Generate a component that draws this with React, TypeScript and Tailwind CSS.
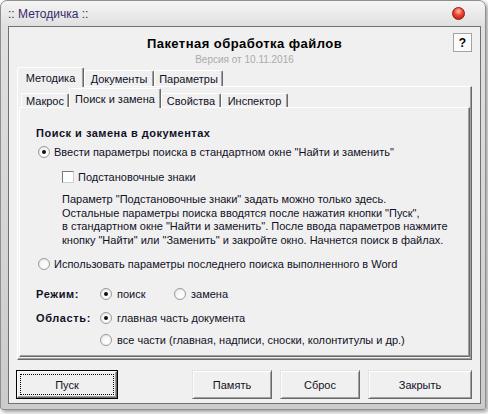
import React from "react";

function Radio({ checked }: { checked?: boolean }) {
  return (
    <span className="flex h-[12px] w-[12px] shrink-0 items-center justify-center rounded-full border border-[#9a9a9a] bg-[radial-gradient(circle_at_60%_65%,#ffffff_0%,#f6f6f6_50%,#d9d9d9_100%)]">
      {checked && <span className="h-[4px] w-[4px] rounded-full bg-[#111111]" />}
    </span>
  );
}

function Checkbox() {
  return (
    <span className="h-[12px] w-[12px] shrink-0 border border-t-[#7a7a7a] border-l-[#7a7a7a] border-r-[#cfcfcf] border-b-[#cfcfcf] bg-white" />
  );
}

function Tab({ label, active, w, h }: { label: string; active?: boolean; w: string; h: string }) {
  if (active) {
    return (
      <div
        className={`relative z-10 mb-[-1px] flex shrink-0 items-center justify-center rounded-t-[2px] border-l border-t border-r border-l-white border-t-white border-r-[#696969] bg-[#f0f0f0] shadow-[inset_-1px_0_0_#a0a0a0] ${w} ${h}`}
      >
        {label}
      </div>
    );
  }
  return (
    <div
      className={`flex shrink-0 items-center justify-center rounded-t-[2px] border-l border-t border-r border-l-white border-t-white border-r-[#696969] bg-[#f0f0f0] shadow-[inset_-1px_0_0_#a0a0a0] ${w} ${h}`}
    >
      {label}
    </div>
  );
}

function Btn({ label, w, def }: { label: string; w: string; def?: boolean }) {
  if (def) {
    return (
      <div className={`h-[29px] shrink-0 border border-black ${w}`}>
        <div className="h-full w-full border border-t-white border-l-white border-r-[#696969] border-b-[#696969] bg-[#f0f0f0] p-[2px] shadow-[inset_-1px_-1px_0_#a0a0a0]">
          <div className="flex h-full w-full items-center justify-center border border-dotted border-black">
            {label}
          </div>
        </div>
      </div>
    );
  }
  return (
    <div
      className={`flex h-[29px] shrink-0 items-center justify-center border border-t-[#e3e3e3] border-l-[#e3e3e3] border-r-[#696969] border-b-[#696969] bg-[#f0f0f0] shadow-[inset_1px_1px_0_#ffffff,inset_-1px_-1px_0_#a0a0a0] ${w}`}
    >
      {label}
    </div>
  );
}

export default function App() {
  return (
    <div className="h-[414px] w-[488px] bg-white font-['Liberation_Sans',Arial,sans-serif] text-[11px] leading-[14px] text-[#111126]">
      <div className="flex h-[410px] w-[486px] flex-col rounded-t-[7px] rounded-b-[3px] border border-[#8f8f8f] bg-[linear-gradient(to_bottom,#f5f5f5_0px,#e0e0e0_25px,#cbcbcb_100%)] shadow-[2px_2px_4px_rgba(0,0,0,0.4)]">
        {/* title bar */}
        <div className="flex h-[25px] shrink-0 items-center justify-between pl-[7px] pr-[20px]">
          <span className="text-[12px] text-[#3a2868]">:: Методичка ::</span>
          <span className="h-[13px] w-[13px] rounded-full border border-[#8a1a12] bg-[radial-gradient(circle_at_50%_30%,#ffc0b5_0%,#f0412d_45%,#b51b0f_100%)]" />
        </div>

        <div className="flex pl-[7px]">
          <div className="flex h-[378px] w-[473px] flex-col border border-[#717171] bg-[#f0f0f0]">
            {/* header */}
            <div className="grid grid-cols-[1fr_auto_1fr] pt-[6px]">
              <div />
              <div className="mt-[3px] text-center text-[13px] font-bold leading-[16px] tracking-[0.45px] text-black">
                Пакетная обработка файлов
              </div>
              <div className="flex justify-end pr-[8px]">
                <div className="flex h-[19px] w-[19px] items-center justify-center border border-[#a3a3a3] bg-[#fbfbfb] text-[12px] font-bold text-black">
                  ?
                </div>
              </div>
            </div>
            <div className="mt-[1px] h-[13px] text-center text-[10px] leading-[13px] text-[#ababab]">
              Версия от 10.11.2016
            </div>

            {/* outer tabs */}
            <div className="mx-[8px] mt-[1px] flex h-[19px] items-end">
              <Tab label="Методика" active w="w-[67px]" h="h-[20px]" />
              <Tab label="Документы" w="w-[70px]" h="h-[16px]" />
              <Tab label="Параметры" w="w-[69px]" h="h-[16px]" />
            </div>
            <div className="mx-[8px] flex h-[274px] flex-col border border-t-white border-l-white border-r-[#696969] border-b-[#696969] shadow-[inset_-1px_-1px_0_#a0a0a0]">
              {/* inner tabs */}
              <div className="mt-[1px] flex h-[19px] items-end pl-[3px]">
                <Tab label="Макрос" w="w-[48px]" h="h-[14px]" />
                <Tab label="Поиск и замена" active w="w-[92px]" h="h-[20px]" />
                <Tab label="Свойства" w="w-[60px]" h="h-[14px]" />
                <Tab label="Инспектор" w="w-[67px]" h="h-[14px]" />
              </div>
              <div className="mx-[1px] mb-[2px] flex flex-1 flex-col border border-t-white border-l-white border-r-[#696969] border-b-[#696969] pl-[16px] pt-[18px] shadow-[inset_-1px_-1px_0_#a0a0a0]">
                <div className="h-[14px] font-bold tracking-[0.5px]">Поиск и замена в документах</div>

                <div className="mt-[5px] flex h-[14px] items-center gap-[4px] pl-[2px]">
                  <Radio checked />
                  <span className="whitespace-nowrap">
                    Ввести параметры поиска в стандартном окне "Найти и заменить"
                  </span>
                </div>

                <div className="mt-[11px] flex h-[14px] items-center gap-[4px] pl-[26px]">
                  <Checkbox />
                  <span>Подстановочные знаки</span>
                </div>

                <div className="mt-[9px] pl-[26px] leading-[13.5px]">
                  <div className="whitespace-nowrap">Параметр "Подстановочные знаки" задать можно только здесь.</div>
                  <div className="whitespace-nowrap">Остальные параметры поиска вводятся после нажатия кнопки "Пуск",</div>
                  <div className="whitespace-nowrap">в стандартном окне "Найти и заменить". После ввода параметров нажмите</div>
                  <div className="whitespace-nowrap">кнопку "Найти" или "Заменить" и закройте окно. Начнется поиск в файлах.</div>
                </div>

                <div className="mt-[10px] flex h-[14px] items-center gap-[4px] pl-[2px]">
                  <Radio />
                  <span className="whitespace-nowrap">
                    Использовать параметры последнего поиска выполненного в Word
                  </span>
                </div>

                <div className="mt-[16px] flex h-[14px] items-center">
                  <span className="w-[64px] font-bold tracking-[0.6px]">Режим:</span>
                  <div className="flex w-[74px] items-center gap-[5px]">
                    <Radio checked />
                    <span>поиск</span>
                  </div>
                  <div className="flex items-center gap-[5px]">
                    <Radio />
                    <span>замена</span>
                  </div>
                </div>

                <div className="mt-[10px] flex h-[14px] items-center">
                  <span className="w-[64px] font-bold tracking-[0.6px]">Область:</span>
                  <div className="flex items-center gap-[5px]">
                    <Radio checked />
                    <span>главная часть документа</span>
                  </div>
                </div>

                <div className="mt-[8px] flex h-[14px] items-center pl-[64px]">
                  <div className="flex items-center gap-[5px]">
                    <Radio />
                    <span className="whitespace-nowrap">все части (главная, надписи, сноски, колонтитулы и др.)</span>
                  </div>
                </div>
              </div>
            </div>

            {/* buttons */}
            <div className="ml-[7px] mt-[10px] flex items-center">
              <Btn label="Пуск" def w="w-[102px]" />
              <div className="ml-[74px] flex gap-[8px]">
                <Btn label="Память" w="w-[80px]" />
                <Btn label="Сброс" w="w-[80px]" />
                <Btn label="Закрыть" w="w-[104px]" />
              </div>
            </div>
          </div>
        </div>
      </div>
    </div>
  );
}
